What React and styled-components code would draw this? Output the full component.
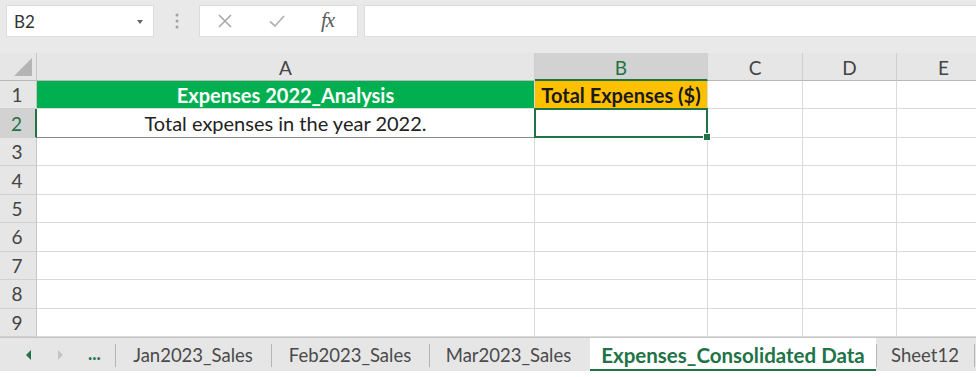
import React from 'react';
import styled, { createGlobalStyle, css } from 'styled-components';

const GlobalStyle = createGlobalStyle`
  html, body {
    margin: 0;
    padding: 0;
    background: #ffffff;
    overflow: hidden;
  }
  * {
    box-sizing: border-box;
  }
`;

const FONT = `Lato, "Open Sans", "Liberation Sans", sans-serif`;
const GREEN = '#217346';
const GRID = '#dadada';

const Page = styled.div`
  width: 976px;
  height: 377px;
  display: flex;
  flex-direction: column;
  font-family: ${FONT};
  background: #ffffff;
  overflow: hidden;
`;

const Toolbar = styled.div`
  height: 53px;
  flex: none;
  background: #e9e9e9;
  display: flex;
  align-items: flex-start;
  padding: 5px 0 0 6px;
`;

const NameBox = styled.div`
  width: 148px;
  height: 32px;
  background: #ffffff;
  border: 1px solid #dcdcdc;
  display: flex;
  align-items: center;
  justify-content: space-between;
  padding: 0 10px 0 7px;
  font-size: 17px;
  color: #333;
`;

const Caret = styled.span`
  width: 0;
  height: 0;
  border-left: 3.5px solid transparent;
  border-right: 3.5px solid transparent;
  border-top: 4px solid #666;
  margin-top: 1px;
`;

const Grip = styled.div`
  width: 45px;
  height: 32px;
  display: flex;
  align-items: center;
  justify-content: center;
`;

const FormulaButtons = styled.div`
  width: 159px;
  height: 32px;
  background: #ffffff;
  border: 1px solid #dcdcdc;
  display: flex;
  align-items: center;
  padding: 0 0 0 17px;
  gap: 35px;
`;

const Fx = styled.span`
  font-family: "Liberation Serif", "DejaVu Serif", serif;
  font-style: italic;
  font-size: 21px;
  color: #5a5a5a;
  letter-spacing: -1px;
  margin-top: -2px;
`;

const FormulaInput = styled.div`
  flex: 1;
  height: 32px;
  margin-left: 6px;
  background: #ffffff;
  border: 1px solid #dcdcdc;
  border-right: none;
`;

const Grid = styled.div`
  flex: none;
  width: 1000px;
  height: 284px;
  display: grid;
  grid-template-columns: 37px 498px 173px 95px 94px 94px;
  grid-template-rows: 28px repeat(9, 1fr);
`;

const Corner = styled.div`
  background: #e6e6e6;
  border-right: 1px solid #c8c8c8;
  border-bottom: 1px solid #b8b8b8;
  position: relative;
  &::after {
    content: '';
    position: absolute;
    right: 4px;
    bottom: 4px;
    width: 0;
    height: 0;
    border-left: 18px solid transparent;
    border-bottom: 18px solid #b4b4b4;
  }
`;

const ColHead = styled.div`
  background: ${(p) => (p.$active ? '#d2d2d2' : '#e6e6e6')};
  color: ${(p) => (p.$active ? GREEN : '#444')};
  border-right: 1px solid #cfcfcf;
  border-bottom: ${(p) => (p.$active ? `2px solid ${GREEN}` : '1px solid #b8b8b8')};
  display: flex;
  align-items: center;
  justify-content: center;
  font-size: 19px;
  padding-top: 2px;
`;

const RowHead = styled.div`
  background: ${(p) => (p.$active ? '#d2d2d2' : '#e6e6e6')};
  color: ${(p) => (p.$active ? GREEN : '#444')};
  border-right: ${(p) => (p.$active ? `2px solid ${GREEN}` : '1px solid #c6c6c6')};
  border-bottom: 1px solid #d0d0d0;
  display: flex;
  align-items: center;
  justify-content: center;
  padding-right: 2px;
  font-size: 19px;
`;

const Cell = styled.div`
  position: relative;
  background: ${(p) => p.$fill || '#ffffff'};
  color: ${(p) => p.$color || '#222'};
  font-weight: ${(p) => (p.$bold ? 700 : 400)};
  border-right: 1px solid ${GRID};
  border-bottom: 1px solid ${(p) => p.$bottom || GRID};
  display: flex;
  align-items: center;
  justify-content: center;
  font-size: 20px;
  white-space: nowrap;
  ${(p) =>
    p.$selected &&
    css`
      &::after {
        content: '';
        position: absolute;
        left: -1px;
        top: -1px;
        right: -1px;
        bottom: -1px;
        border: 2px solid ${GREEN};
        pointer-events: none;
      }
      &::before {
        content: '';
        position: absolute;
        right: -4px;
        bottom: -4px;
        width: 6px;
        height: 6px;
        background: ${GREEN};
        border: 1px solid #ffffff;
        z-index: 2;
      }
    `}
`;

const TabBar = styled.div`
  flex: none;
  height: 34px;
  background: #e6e6e6;
  border-top: 1px solid #c6c6c6;
  display: flex;
  align-items: stretch;
  font-size: 18.5px;
  color: #4a4a4a;
`;

const Nav = styled.div`
  width: 115px;
  flex: none;
  display: flex;
  align-items: center;
  padding-left: 26px;
`;

const Arrow = styled.span`
  width: 0;
  height: 0;
  border-top: 5px solid transparent;
  border-bottom: 5px solid transparent;
  ${(p) =>
    p.$dir === 'left'
      ? css`
          border-right: 5px solid ${GREEN};
        `
      : css`
          border-left: 5px solid #c4c4c4;
          margin-left: 27px;
        `}
`;

const Dots = styled.span`
  color: ${GREEN};
  font-weight: 700;
  font-size: 18px;
  margin-left: 25px;
  margin-top: -4px;
`;

const Tab = styled.div`
  flex: none;
  width: ${(p) => p.$w}px;
  display: flex;
  align-items: center;
  justify-content: center;
  position: relative;
  white-space: nowrap;
  ${(p) =>
    p.$active
      ? css`
          background: #ffffff;
          color: ${GREEN};
          font-weight: 700;
          font-size: 20.5px;
          border-bottom: 2px solid ${GREEN};
          padding-top: 2px;
          margin-left: 2px;
        `
      : css`
          &::before {
            content: '';
            position: absolute;
            left: 0;
            top: 6px;
            bottom: 4px;
            border-left: 1px solid #b5b5b5;
          }
        `}
`;

const TabSpacer = styled.div`
  flex: 1;
  position: relative;
  &::before {
    content: '';
    position: absolute;
    left: 0;
    top: 6px;
    bottom: 4px;
    border-left: 1px solid #b5b5b5;
  }
`;

const BottomStrip = styled.div`
  flex: 1;
  background: #ffffff;
`;

const columns = ['A', 'B', 'C', 'D', 'E'];
const tabs = [
  { name: 'Jan2023_Sales', w: 156 },
  { name: 'Feb2023_Sales', w: 158 },
  { name: 'Mar2023_Sales', w: 159 },
  { name: 'Expenses_Consolidated Data', w: 286, active: true },
  { name: 'Sheet12', w: 98 },
];

const cellProps = (row, col) => {
  if (row === 1 && col === 0) return { $fill: '#00b050', $color: '#ffffff', $bold: true, children: 'Expenses 2022_Analysis' };
  if (row === 1 && col === 1) return { $fill: '#ffc000', $color: '#1a1a1a', $bold: true, children: 'Total Expenses ($)' };
  if (row === 2 && col === 0) return { $bottom: '#8a8a8a', children: 'Total expenses in the year 2022.' };
  if (row === 2 && col === 1) return { $selected: true };
  return {};
};

const App = () => (
  <Page>
    <GlobalStyle />
    <Toolbar>
      <NameBox>
        <span>B2</span>
        <Caret />
      </NameBox>
      <Grip>
        <svg width="4" height="18" viewBox="0 0 4 18">
          <circle cx="2" cy="3" r="1.5" fill="#a0a0a0" />
          <circle cx="2" cy="9" r="1.5" fill="#a0a0a0" />
          <circle cx="2" cy="15" r="1.5" fill="#a0a0a0" />
        </svg>
      </Grip>
      <FormulaButtons>
        <svg width="16" height="16" viewBox="0 0 16 16">
          <path d="M2 2 L14 14 M14 2 L2 14" stroke="#a8a8a8" strokeWidth="1.6" fill="none" />
        </svg>
        <svg width="18" height="16" viewBox="0 0 18 16">
          <path d="M2 8.5 L7 13 L16 3" stroke="#b4b4b4" strokeWidth="1.8" fill="none" />
        </svg>
        <Fx>fx</Fx>
      </FormulaButtons>
      <FormulaInput />
    </Toolbar>

    <Grid>
      <Corner />
      {columns.map((c) => (
        <ColHead key={c} $active={c === 'B'}>
          {c}
        </ColHead>
      ))}
      {Array.from({ length: 9 }, (_, r) => {
        const row = r + 1;
        return (
          <React.Fragment key={row}>
            <RowHead $active={row === 2}>{row}</RowHead>
            {columns.map((c, col) => (
              <Cell key={c} {...cellProps(row, col)} />
            ))}
          </React.Fragment>
        );
      })}
    </Grid>

    <TabBar>
      <Nav>
        <Arrow $dir="left" />
        <Arrow $dir="right" />
        <Dots>...</Dots>
      </Nav>
      {tabs.map((t) => (
        <Tab key={t.name} $w={t.w} $active={t.active}>
          {t.name}
        </Tab>
      ))}
      <TabSpacer />
    </TabBar>
    <BottomStrip />
  </Page>
);

export default App;
